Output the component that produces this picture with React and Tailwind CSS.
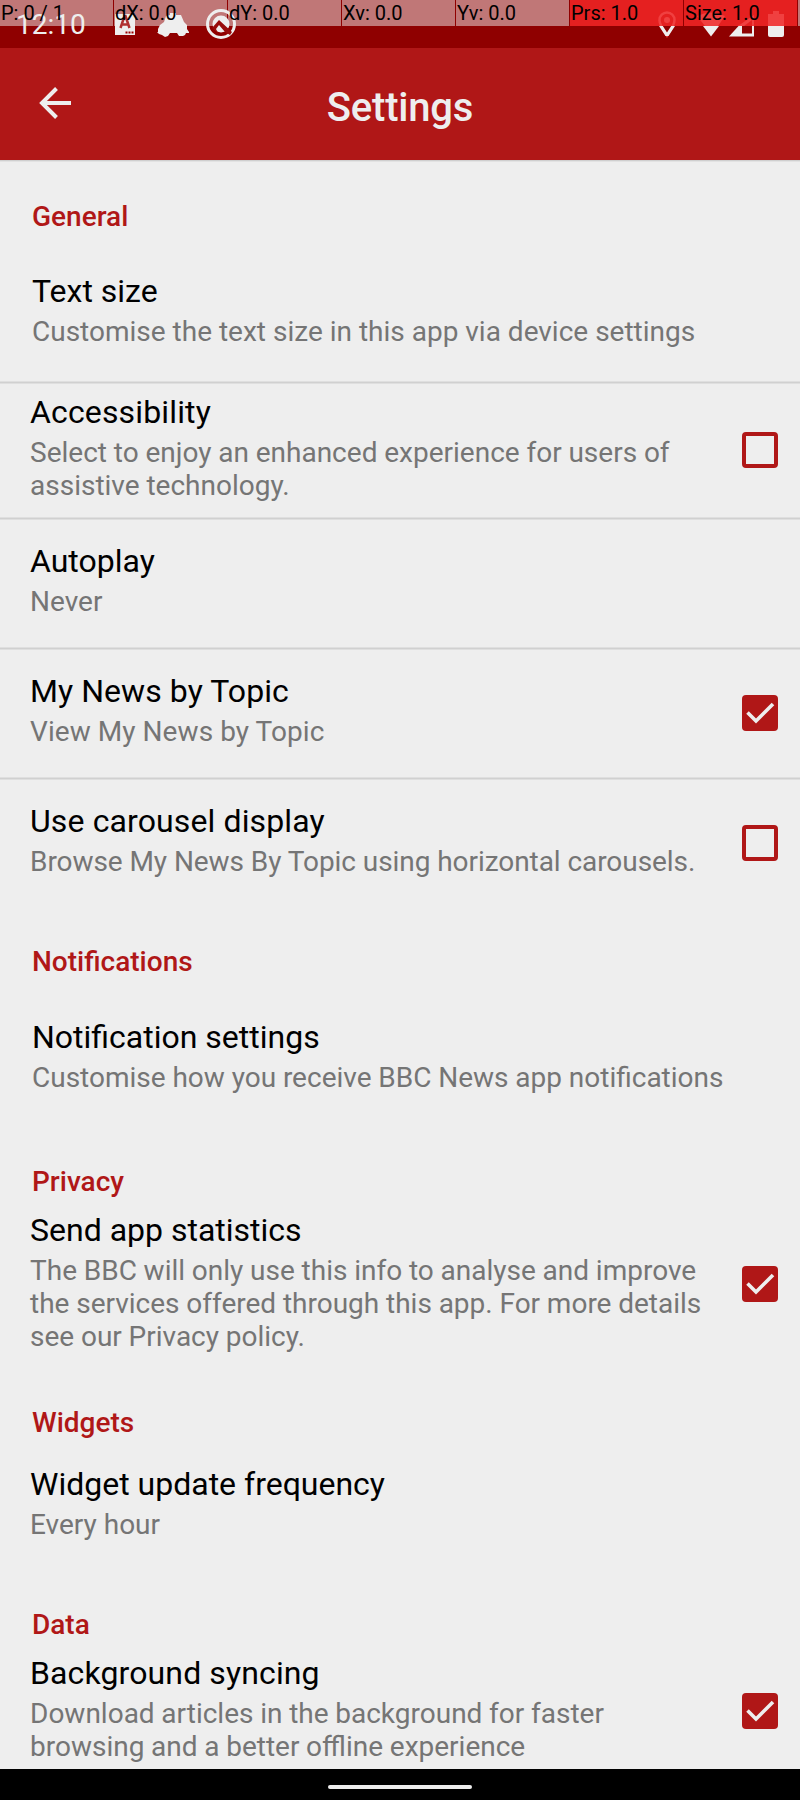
import React from "react";

function Checkbox({ checked }) {
  return (
    <svg className="h-9 w-9 shrink-0" viewBox="0 0 36 36" fill="none">
      {checked ? (
        <>
          <rect width="36" height="36" rx="4" fill="#b01717" />
          <path d="M5.500 17.500 14 26 31 9" stroke="#eee" strokeWidth="3.600" />
        </>
      ) : (
        <rect x="2" y="2" width="32" height="32" rx="2" stroke="#b01717" strokeWidth="4" />
      )}
    </svg>
  );
}

function Heading({ children, className }) {
  return (
    <h2 className={`shrink-0 pl-8 text-[28px] leading-[33px] font-medium text-[#b01717] ${className}`}>{children}</h2>
  );
}

function Item({ title, lines, className, textClass = "", titleClass = "", linesClass = "", checked, divider }) {
  return (
    <div
      className={`flex shrink-0 items-center pr-[22px] ${
        divider ? "border-b border-[#d0d0d0] pb-px shadow-[0_1px_0_#dfdfdf,inset_0_-1px_0_#dfdfdf]" : ""
      } ${className}`}
    >
      <div className={`flex-1 self-start whitespace-nowrap ${textClass}`}>
        <div className={`text-[32px] leading-[38px] text-black ${titleClass}`}>{title}</div>
        <div className={`mt-[5px] text-[28px] leading-[33px] text-[#757575] ${linesClass}`}>
          {lines.map((l) => (
            <div key={l}>{l}</div>
          ))}
        </div>
      </div>
      {checked !== undefined && <Checkbox checked={checked} />}
    </div>
  );
}

const debug = [
  ["P: 0 / 1", "bg-[#c07777]"],
  ["dX: 0.0", "bg-[#c07777]"],
  ["dY: 0.0", "bg-[#c07777]"],
  ["Xv: 0.0", "bg-[#c07777]"],
  ["Yv: 0.0", "bg-[#c07777]"],
  ["Prs: 1.0", "bg-[#e52020]"],
  ["Size: 1.0", "bg-[#e52020]"],
];

function StatusBar() {
  return (
    <div className="relative h-12 shrink-0 bg-[#8f0000]">
      <div className="flex h-[26px] gap-px">
        {debug.map(([t, c]) => (
          <div key={t} className={`h-[26px] w-[113px] shrink-0 ${c}`} />
        ))}
        <div className="flex-1 bg-[#c07777]" />
      </div>
      <div className="absolute inset-x-0 top-0 h-12">
        <svg className="h-12 w-full" viewBox="0 0 800 48" fill="none">
          <rect x="115" y="14" width="20" height="21" fill="#eee" />
          <path d="m120.500 28 4-12h1l4 12M122 24.500h6" stroke="#b03030" strokeWidth="2.500" />
          <path d="M125.500 32.500h2m1 0h2m1 0h2" stroke="#9b0000" strokeWidth="2" />
          <path d="M158 32v-3l2-4 4-3 2-6 4-1v-2h6v2h5l3 7 3 3v4l2 3v1h-3l-1 2-2 1h-4l-2-3h-7l-2 3-3 1-3-2-3-1-2-2z" fill="#eee" />
          <circle cx="221" cy="24" r="13.500" stroke="#eee" strokeWidth="3" />
          <circle cx="221" cy="24" r="8.500" fill="#eee" />
          <path d="m212 28 7-8 13 12-2 3-5-3-6-7-3 4 2 4z" fill="#980c0c" />
          <path d="M667 35.500c-3-5-7.500-10-7.500-15.500a7.500 7.500 0 0 1 15 0c0 5.500-4.500 10.500-7.500 15.500z" stroke="#f04040" strokeWidth="2.500" />
          <circle cx="667" cy="20" r="3" fill="#f04040" />
          <path d="M659 26h3.800l4.200 6.500 4.200-6.500h3.800l-6.500 10h-3z" fill="#eee" />
          <path d="M697 16q14-7 28 0l-7 10h-13z" fill="#f04040" />
          <path d="M703 26h16l-8 10.500z" fill="#eee" />
          <path d="m738 26 16-11v11z" fill="#f04040" />
          <path d="M729 36.500 738.500 26H754v10.500z" fill="#eee" />
          <path d="M742 26h10v7.500h-10z" fill="#8f0000" />
          <path d="m744 26 8-6v6z" fill="#e52020" />
          <path d="M768 26V14h5v-3h6v3h5v12z" fill="#f04040" />
          <path d="M768 26h16v9q0 2-2 2h-12q-2 0-2-2z" fill="#eee" />
        </svg>
      </div>
      <div className="absolute top-[9px] left-4 text-[28px] leading-8 text-[#eee]">12:10</div>
      <div className="absolute inset-x-0 top-0 flex gap-px text-[20px] leading-[26px] text-black">
        {debug.map(([t]) => (
          <div key={t} className="w-[113px] pl-px whitespace-nowrap">{t}</div>
        ))}
      </div>
    </div>
  );
}

export default function App() {
  return (
    <div className="flex h-[1800px] w-[800px] flex-col overflow-hidden bg-[#eee] font-['Roboto',sans-serif]">
      <StatusBar />
      <header className="relative flex h-28 shrink-0 items-center bg-[#b01717] px-[38px] text-[#eee] shadow-[0_1px_0_#cfcfcf,0_2px_0_#e2e2e2]">
        <svg className="mb-[3px] h-9 w-9" viewBox="0 0 36 36" fill="none" stroke="#eee" strokeWidth="4">
          <path d="M33 18H4M18.500 3.500 4 18l14.500 14.500" />
        </svg>
        <h1 className="mt-1.5 flex-1 pr-9 text-center text-[40px] leading-[47px] font-medium tracking-[-0.2px]">Settings</h1>
      </header>
      <main className="flex h-[1609px] shrink-0 flex-col overflow-hidden">
        <Heading className="h-[78px] pt-10">General</Heading>
        <Item className="h-[145px] pl-8" textClass="pt-[34px]" divider title="Text size" lines={["Customise the text size in this app via device settings"]} />
        <Item className="h-[136px] pl-[30px]" textClass="pt-[10px]" titleClass="tracking-[0.15px]" linesClass="[word-spacing:-0.15px]" divider checked={false} title="Accessibility" lines={["Select to enjoy an enhanced experience for users of", "assistive technology."]} />
        <Item className="h-[130px] pl-[30px]" textClass="pt-[23px]" divider title="Autoplay" lines={["Never"]} />
        <Item className="h-[130px] pl-[30px]" textClass="pt-[23px]" titleClass="tracking-[0.06px]" linesClass="tracking-[0.06px]" divider checked={true} title="My News by Topic" lines={["View My News by Topic"]} />
        <Item className="h-[128px] pl-[30px]" textClass="pt-[23px]" titleClass="tracking-[0.12px]" linesClass="tracking-[-0.065px]" checked={false} title="Use carousel display" lines={["Browse My News By Topic using horizontal carousels."]} />
        <Heading className="h-[78px] pt-[38px]">Notifications</Heading>
        <Item className="h-[143px] pl-8" textClass="pt-[33px]" linesClass="[word-spacing:-0.15px]" title="Notification settings" lines={["Customise how you receive BBC News app notifications"]} />
        <Heading className="h-[78px] pt-[37px]">Privacy</Heading>
        <Item className="mt-[5px] h-[145px] pl-[30px]" linesClass="[word-spacing:-0.18px]" checked={true} title="Send app statistics" lines={["The BBC will only use this info to analyse and improve", "the services offered through this app. For more details", "see our Privacy policy."]} />
        <Heading className="h-[73px] pt-[50px]">Widgets</Heading>
        <Item className="h-[143px] pl-[30px]" textClass="pt-9" title="Widget update frequency" lines={["Every hour"]} />
        <Heading className="h-[78px] pt-9">Data</Heading>
        <Item className="mt-1 h-[114px] pl-[30px]" titleClass="tracking-[0.12px]" linesClass="[word-spacing:-0.25px]" checked={true} title="Background syncing" lines={["Download articles in the background for faster", "browsing and a better offline experience"]} />
      </main>
      <div className="flex h-[31px] shrink-0 justify-center bg-black pt-4">
        <div className="h-1 w-36 rounded-full bg-[#eee]" />
      </div>
    </div>
  );
}
